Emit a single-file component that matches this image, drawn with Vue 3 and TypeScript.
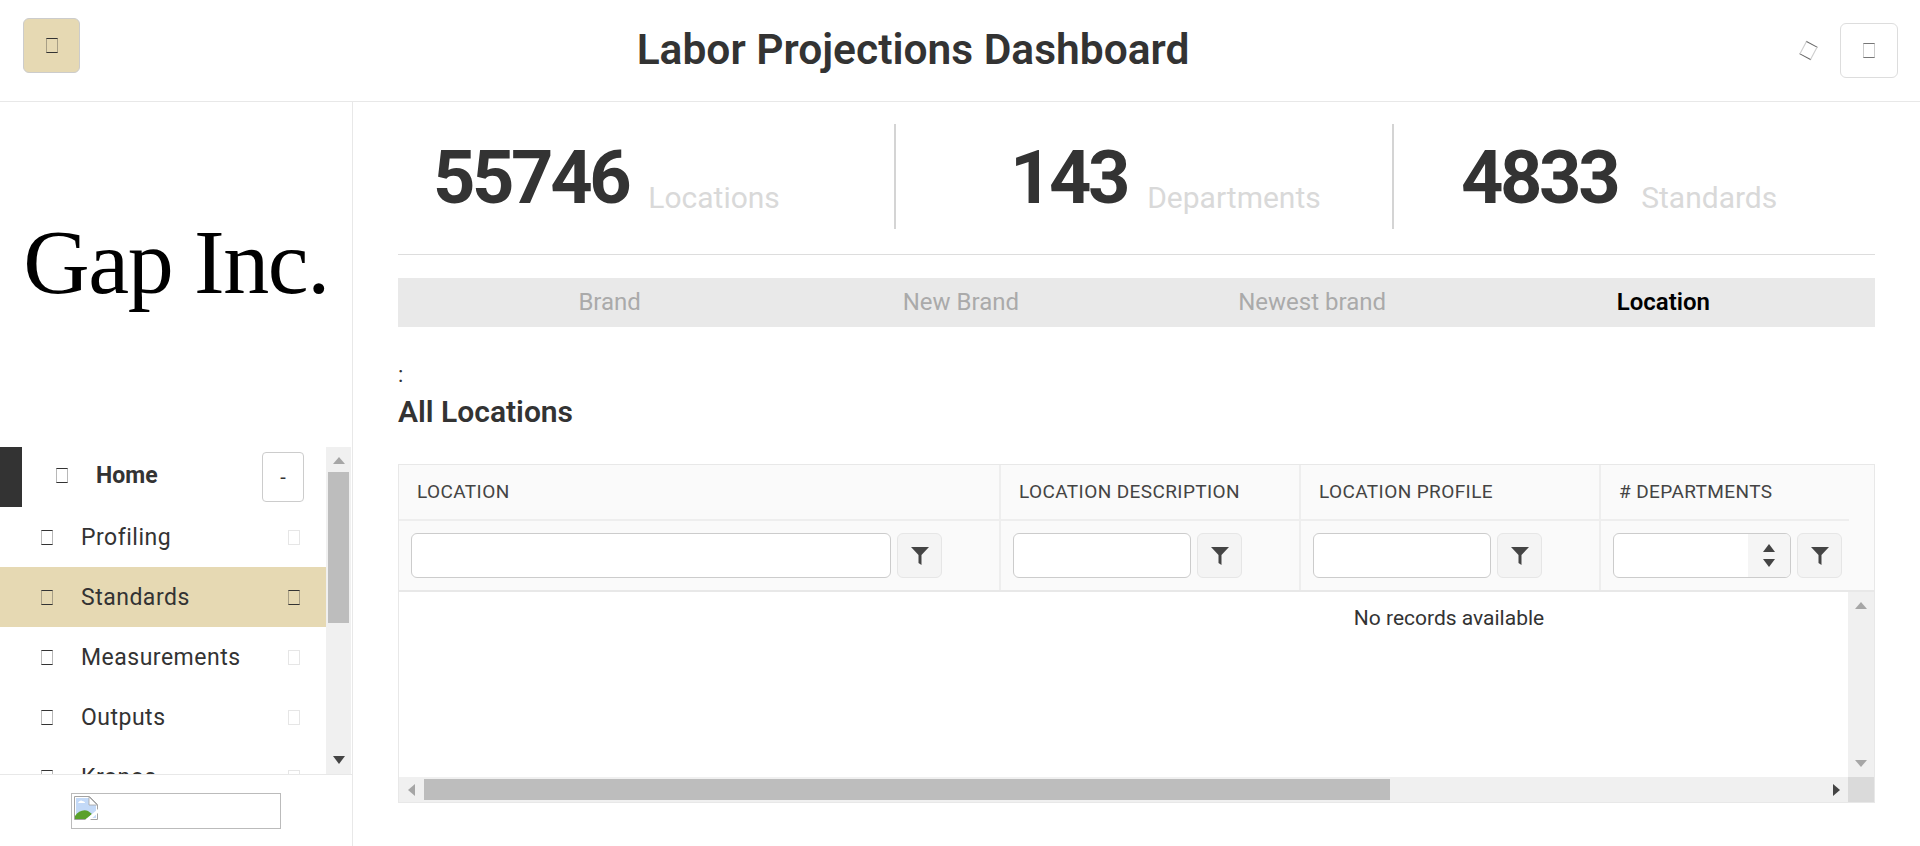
<template>
  <div class="app">
    <header class="topbar">
      <button class="menu-btn"><span class="tofu"></span></button>
      <h1 class="title">Labor Projections Dashboard</h1>
      <div class="top-actions">
        <span class="tofu tofu-tilted"></span>
        <button class="user-btn"><span class="tofu tofu-gray"></span></button>
      </div>
    </header>

    <div class="body">
      <aside class="sidebar">
        <div class="logo">Gap Inc.</div>
        <nav class="nav">
          <div class="nav-list">
            <div class="nav-home">
              <span class="home-mark"></span>
              <span class="tofu"></span>
              <span class="home-label">Home</span>
              <button class="collapse-btn">-</button>
            </div>
            <div
              v-for="item in navItems"
              :key="item"
              class="nav-item"
              :class="{ active: item === 'Standards' }"
            >
              <span class="tofu"></span>
              <span class="nav-label">{{ item }}</span>
              <span class="tofu tofu-end"></span>
            </div>
          </div>
          <div class="vbar">
            <span class="arrow-up"></span>
            <div class="nav-thumb"></div>
            <span class="arrow-down dark"></span>
          </div>
        </nav>
        <div class="side-foot">
          <div class="broken-img">
            <svg width="24" height="24" viewBox="0 0 24 24">
              <path d="M.5.5h15l8 8v15H.5z" fill="#fff" stroke="#a3a3a3" />
              <path d="M2 2h13v7h7v13H2z" fill="#c3d9f7" />
              <path d="M15 1l8 8h-8z" fill="#fff" stroke="#a3a3a3" stroke-width=".8" />
              <path d="M4 7c1-2 3-3 4-2 2 0 3 1 3 2z" fill="#fff" />
              <path d="M1 23v-3c3-5 9-7 13-5l4 3-6 5z" fill="#5aa02c" />
              <path d="M11 24l13-11v4l-8 7z" fill="#fff" />
            </svg>
          </div>
        </div>
      </aside>

      <main class="content">
        <section class="stats">
          <div v-for="stat in stats" :key="stat.label" class="stat">
            <span class="stat-num">{{ stat.value }}</span>
            <span class="stat-label">{{ stat.label }}</span>
          </div>
        </section>

        <div class="tabs">
          <div
            v-for="tab in tabs"
            :key="tab"
            class="tab"
            :class="{ current: tab === 'Location' }"
          >
            {{ tab }}
          </div>
        </div>

        <div class="colon">:</div>
        <h2 class="section-title">All Locations</h2>

        <div class="grid">
          <div class="grid-head">
            <div v-for="col in columns" :key="col.name" class="head-cell" :style="{ width: col.width + 'px' }">
              {{ col.name }}
            </div>
          </div>
          <div class="grid-filter">
            <div v-for="col in columns" :key="col.name" class="filter-cell" :style="{ width: col.width + 'px' }">
              <div class="filter-input" :style="{ width: col.input + 'px' }">
                <div v-if="col.numeric" class="spinner">
                  <span class="arrow-up dark"></span>
                  <span class="arrow-down dark"></span>
                </div>
              </div>
              <button class="filter-btn">
                <svg width="20" height="20" viewBox="0 0 20 20">
                  <path d="M1 1h18l-7.5 8v10l-3-2V9z" fill="#444" />
                </svg>
              </button>
            </div>
          </div>
          <div class="grid-body">
            <div class="rows">
              <div class="empty">No records available</div>
            </div>
            <div class="vbar vbar-grid">
              <span class="arrow-up"></span>
              <span class="arrow-down"></span>
            </div>
          </div>
          <div class="hbar">
            <div class="hbar-track">
              <span class="arrow-left"></span>
              <div class="hbar-thumb"></div>
              <span class="arrow-right"></span>
            </div>
            <div class="hbar-corner"></div>
          </div>
        </div>
      </main>
    </div>
  </div>
</template>

<script setup lang="ts">
interface Column {
  name: string
  width: number
  input: number
  numeric?: boolean
}

const navItems = ['Profiling', 'Standards', 'Measurements', 'Outputs', 'Kronos']

const stats = [
  { value: '55746', label: 'Locations' },
  { value: '143', label: 'Departments' },
  { value: '4833', label: 'Standards' }
]

const tabs = ['Brand', 'New Brand', 'Newest brand', 'Location']

const columns: Column[] = [
  { name: 'Location', width: 602, input: 480 },
  { name: 'Location Description', width: 300, input: 178 },
  { name: 'Location Profile', width: 300, input: 178 },
  { name: '# Departments', width: 248, input: 178, numeric: true }
]
</script>

<style>
html,
body {
  margin: 0;
  background: #fff;
}
</style>

<style scoped>
.app {
  display: flex;
  flex-direction: column;
  height: 846px;
  overflow: hidden;
  font-family: Roboto, "Noto Sans", sans-serif;
  color: #333;
}

.topbar {
  display: flex;
  align-items: center;
  flex: none;
  height: 102px;
  padding: 0 22px 10px 23px;
  box-sizing: border-box;
  border-bottom: 1px solid #e8e8e8;
}

.menu-btn {
  display: flex;
  align-items: center;
  justify-content: center;
  width: 57px;
  height: 55px;
  background: #e6d9b3;
  border: 1px solid #ccc;
  border-radius: 6px;
  padding: 0;
}

.title {
  flex: 1;
  margin: 8px 56px 0 0;
  text-align: center;
  font-size: 42.5px;
  font-weight: 600;
  line-height: 48px;
  color: #333;
}

.top-actions {
  display: flex;
  align-items: center;
  gap: 25px;
  margin-top: 10px;
}

.user-btn {
  display: flex;
  align-items: center;
  justify-content: center;
  width: 58px;
  height: 55px;
  background: #fff;
  border: 1px solid #ddd;
  border-radius: 6px;
  padding: 0;
}

.tofu {
  display: inline-block;
  flex: none;
  width: 12px;
  height: 15px;
  box-sizing: border-box;
  border: 1px solid rgba(51, 51, 51, 0.35);
  border-top-color: #333;
  border-bottom-color: #333;
}

.tofu-gray {
  border-color: #ccc;
  border-top-color: #777;
  border-bottom-color: #777;
}

.tofu-tilted {
  transform: rotate(28deg);
  width: 13px;
  height: 15px;
  border-color: #ccc;
  border-top-color: #666;
  border-bottom-color: #666;
}

.body {
  flex: 1;
  display: flex;
  min-height: 0;
}

.sidebar {
  flex: none;
  width: 353px;
  box-sizing: border-box;
  border-right: 1px solid #e8e8e8;
  display: flex;
  flex-direction: column;
}

.logo {
  flex: none;
  height: 345px;
  display: flex;
  align-items: center;
  justify-content: center;
  padding-bottom: 26px;
  box-sizing: border-box;
  font-family: "Liberation Serif", serif;
  font-size: 92px;
  color: #000;
  letter-spacing: -1.4px;
  line-height: 1;
}

.nav {
  flex: none;
  height: 328px;
  display: flex;
  overflow: hidden;
  border-bottom: 1px solid #e8e8e8;
  box-sizing: border-box;
}

.nav-list {
  width: 326px;
  flex: none;
}

.nav-home {
  position: relative;
  display: flex;
  align-items: center;
  height: 60px;
  padding-left: 56px;
  box-sizing: border-box;
}

.nav-home .tofu,
.home-label {
  margin-bottom: 3px;
}

.home-mark {
  position: absolute;
  left: 0;
  top: 0;
  width: 22px;
  height: 60px;
  background: #333;
}

.home-label {
  margin-left: 28px;
  font-size: 23px;
  font-weight: 700;
  color: #333;
}

.collapse-btn {
  margin-left: auto;
  margin-right: 22px;
  width: 42px;
  height: 50px;
  background: #fff;
  border: 1px solid #ccc;
  border-radius: 4px;
  font-family: inherit;
  font-size: 20px;
  color: #333;
  padding: 0;
}

.nav-item {
  display: flex;
  align-items: center;
  height: 60px;
  padding: 0 26px 0 41px;
  box-sizing: border-box;
  font-size: 23px;
  color: #333;
}

.nav-item.active {
  background: #e6d9b3;
}

.nav-label {
  margin-left: 28px;
  letter-spacing: 0.5px;
}

.tofu-end {
  margin-left: auto;
  border-color: #e6e6e6;
}

.active .tofu-end {
  border-color: rgba(51, 51, 51, 0.35);
  border-top-color: #333;
  border-bottom-color: #333;
}

.vbar {
  position: relative;
  flex: none;
  width: 25px;
  background: #f0f0f0;
  display: flex;
  flex-direction: column;
  align-items: center;
}

.nav-thumb {
  position: absolute;
  left: 2px;
  top: 25px;
  width: 21px;
  height: 151px;
  background: #bdbdbd;
}

.arrow-up,
.arrow-down {
  width: 0;
  height: 0;
  border-left: 6px solid transparent;
  border-right: 6px solid transparent;
}

.arrow-up {
  border-bottom: 7px solid #a6a6a6;
  margin-top: 10px;
}

.arrow-down {
  border-top: 7px solid #a6a6a6;
  margin-top: auto;
  margin-bottom: 10px;
}

.arrow-up.dark {
  border-bottom: 8px solid #444;
}

.arrow-down.dark {
  border-top: 8px solid #444;
}

.side-foot {
  flex: 1;
  padding: 18px 0 0 71px;
}

.broken-img {
  width: 210px;
  height: 36px;
  box-sizing: border-box;
  border: 1px solid #bbb;
  padding: 2px;
  line-height: 0;
}

.content {
  flex: 1;
  min-width: 0;
  padding: 22px 45px 0 45px;
}

.stats {
  display: grid;
  grid-template-columns: 498px 498px 1fr;
  grid-template-rows: 105px;
  height: 131px;
  box-sizing: border-box;
  border-bottom: 1px solid #ddd;
}

.stat {
  display: flex;
  align-items: flex-start;
  gap: 20px;
  border-right: 2px solid #d4d4d4;
  padding-left: 35px;
  box-sizing: border-box;
}

.stat:nth-child(2) {
  padding-left: 114px;
}

.stat:last-child {
  gap: 24px;
  padding-left: 67px;
  border-right: none;
}

.stat-num {
  font-size: 74px;
  line-height: 108px;
  font-weight: 700;
  letter-spacing: -3.4px;
  color: #333;
}

.stat-label {
  margin-top: 56px;
  font-size: 30px;
  line-height: 36px;
  color: #d9d9d9;
}

.tabs {
  display: grid;
  grid-template-columns: repeat(4, 1fr);
  height: 49px;
  margin-top: 23px;
  padding: 0 36px;
  background: #e9e9e9;
}

.tab {
  display: flex;
  align-items: center;
  justify-content: center;
  padding-bottom: 2px;
  font-size: 24px;
  color: #aaa;
}

.tab.current {
  color: #000;
  font-weight: 600;
}

.colon {
  margin-top: 36px;
  font-size: 22px;
  line-height: 24px;
  color: #333;
}

.section-title {
  margin: 5px 0 0;
  font-size: 30px;
  font-weight: 600;
  line-height: 40px;
  color: #333;
}

.grid {
  margin-top: 32px;
  width: 1477px;
  box-sizing: border-box;
  border: 1px solid #e8e8e8;
  display: flex;
  flex-direction: column;
  height: 339px;
}

.grid-head {
  display: flex;
  height: 56px;
  flex: none;
  background: #fafafa;
}

.head-cell {
  height: 56px;
  box-sizing: border-box;
  padding-left: 18px;
  line-height: 54px;
  font-size: 19px;
  letter-spacing: 0.4px;
  text-transform: uppercase;
  color: #444;
  border-right: 2px solid #eee;
  border-bottom: 2px solid #eee;
}

.head-cell:last-child {
  border-right: none;
}

.grid-filter {
  display: flex;
  flex: none;
  height: 71px;
  background: #fafafa;
  border-bottom: 2px solid #e8e8e8;
  box-sizing: border-box;
}

.filter-cell {
  display: flex;
  gap: 6px;
  box-sizing: border-box;
  padding: 12px 0 0 12px;
  border-right: 2px solid #eee;
}

.filter-cell:last-child {
  border-right: none;
}

.filter-input {
  position: relative;
  height: 45px;
  box-sizing: border-box;
  background: #fff;
  border: 1px solid #ccc;
  border-radius: 6px;
  overflow: hidden;
}

.spinner {
  position: absolute;
  top: 0;
  right: 0;
  bottom: 0;
  width: 42px;
  background: #f5f5f5;
  display: flex;
  flex-direction: column;
  align-items: center;
}

.filter-btn {
  display: flex;
  align-items: center;
  justify-content: center;
  width: 45px;
  height: 45px;
  padding: 0;
  background: #f4f4f4;
  border: 1px solid #e6e6e6;
  border-radius: 6px;
}

.grid-body {
  flex: 1;
  display: flex;
  min-height: 0;
}

.rows {
  flex: 1;
  min-width: 0;
  overflow: hidden;
}

.empty {
  width: 2100px;
  padding-top: 12px;
  text-align: center;
  font-size: 21px;
  line-height: 28px;
  color: #333;
}

.vbar-grid {
  width: 26px;
}

.hbar {
  flex: none;
  display: flex;
  height: 25px;
}

.hbar-track {
  position: relative;
  flex: 1;
  background: #f0f0f0;
}

.hbar-thumb {
  position: absolute;
  left: 25px;
  top: 2px;
  width: 966px;
  height: 21px;
  background: #bdbdbd;
}

.arrow-left,
.arrow-right {
  position: absolute;
  top: 7px;
  width: 0;
  height: 0;
  border-top: 6px solid transparent;
  border-bottom: 6px solid transparent;
}

.arrow-left {
  left: 9px;
  border-right: 7px solid #a6a6a6;
}

.arrow-right {
  right: 8px;
  border-left: 7px solid #444;
}

.hbar-corner {
  width: 26px;
  background: #dadada;
}
</style>
